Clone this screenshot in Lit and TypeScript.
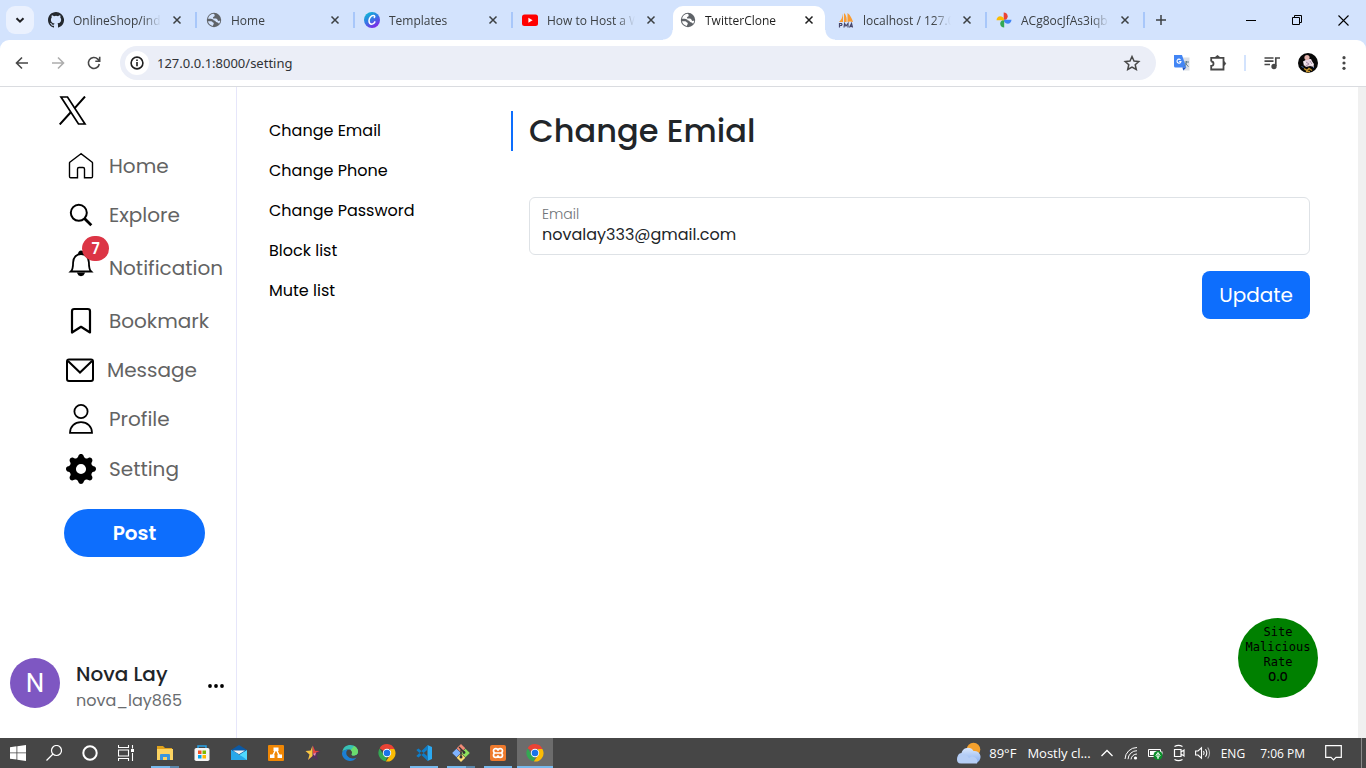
import { LitElement, html, css, svg, nothing } from "lit";
import { customElement } from "lit/decorators.js";
import { classMap } from "lit/directives/class-map.js";

const globe = svg`<svg class="fav" viewBox="0 0 16 16"><circle cx="8" cy="8" r="7.200" fill="#5f6368"/><path d="M7.200 1.800C8.400 2 9 3 8.600 4c-.4.900-1.600.800-1.700 1.700 0 .8.900.900 2 .9 1.300 0 2.400.400 2.700 1.500.3 1.200 1.600 1.100 2.500.5.1 1.200-.4 2.400-1 3.200-.9-.4-1.200-1.500-2.300-1.500-1.200 0-1.300-1.700-2.400-1.700-.7 0-.9-.5-1.300-1C6.500 7 5.300 6.700 4 6.700H2c.6-2.600 2.700-4.600 5.200-4.900zM2 9.300h3.200c1.100 0 1.100 1 1.900 1.300.8.300.9 1.200.3 1.900-.3.400-.3 1-.6 1.400C4.300 13.500 2.400 11.600 2 9.300z" fill="#d3e3fd" class="land"/></svg>`;
const github = svg`<svg class="fav" viewBox="0 0 16 16"><path fill="#24292f" d="M8 0C3.580 0 0 3.580 0 8c0 3.540 2.290 6.530 5.470 7.590.4.070.550-.170.550-.380 0-.190-.010-.820-.010-1.490-2.010.370-2.530-.490-2.690-.940-.090-.230-.480-.940-.820-1.130-.280-.150-.680-.520-.010-.530.630-.010 1.080.580 1.230.820.720 1.210 1.870.870 2.330.660.070-.520.280-.870.510-1.070-1.780-.2-3.640-.890-3.640-3.950 0-.870.310-1.590.820-2.150-.080-.2-.360-1.020.080-2.120 0 0 .670-.210 2.200.820a7.600 7.600 0 0 1 4 0c1.530-1.040 2.200-.820 2.200-.820.440 1.100.160 1.920.080 2.120.510.560.820 1.270.820 2.150 0 3.070-1.870 3.750-3.650 3.950.290.250.540.730.540 1.480 0 1.070-.010 1.930-.010 2.200 0 .210.150.460.550.380A8 8 0 0 0 8 0z"/></svg>`;
const canva = svg`<svg class="fav" viewBox="0 0 16 16"><defs><linearGradient id="cv" x1="0" y1="0" x2=".6" y2="1"><stop offset="0" stop-color="#08c8cf"/><stop offset=".5" stop-color="#2f7fe4"/><stop offset="1" stop-color="#7d2ae8"/></linearGradient></defs><circle cx="8" cy="8" r="8" fill="url(#cv)"/><path d="M10.300 5.500c.9-.8.3-2-1-2C7 3.500 5 6.200 5 8.800c0 2 1 3.400 2.700 3.400 1.500 0 2.600-1 3.200-2.300" fill="none" stroke="#fff" stroke-width="1.500" stroke-linecap="round"/></svg>`;
const youtube = svg`<svg class="fav" viewBox="0 0 16 16"><rect x="0" y="2.500" width="16" height="11.500" rx="2.500" fill="#f00"/><path d="M6.400 5.800v5l4.200-2.500z" fill="#fff"/></svg>`;
const pma = svg`<svg class="fav" viewBox="0 0 16 16"><path d="M5 1.500V10H1c2-1.500 3.500-4.500 4-8.500zM6 1c2.500 2 3 6 2.500 9H6zM9.500 1c3 2 4.500 6 5.500 9-2-.8-4-.8-5.500 0z" fill="#f89c34"/><path d="M1.500 15.500v-4h2q1 1 0 2h-2M6 15.500l.6-4 1.400 2.500 2-2.500v4M11.500 15.500l2-4 1 4M12 14.300h2.500" stroke="#47476b" stroke-width="1.200" fill="none"/></svg>`;
const photos = svg`<svg class="fav" viewBox="0 0 16 16"><path d="M7.700 7.800V.5c2.300 0 4 1.600 4 3.700 0 1.500-.8 2.800-2 3.600z" fill="#ea4335"/><path d="M8 7.700h7.500c0 2.300-1.600 4-3.700 4-1.700 0-3.200-1-3.800-2.500z" fill="#4285f4"/><path d="M8.200 8.200v7.300c-2.300 0-4-1.600-4-3.700 0-1.500.8-2.800 2-3.600z" fill="#34a853"/><path d="M8 8.200H.5c0-2.300 1.600-4 3.700-4C5.900 4.200 7.400 5.200 8 6.700z" fill="#fbbc04"/></svg>`;
const closeX = svg`<svg width="10" height="10" viewBox="0 0 10 10"><path d="M1.500 1.500l7 7M8.500 1.500l-7 7" stroke="currentColor" stroke-width="1.500"/></svg>`;

const line = (w: number, h: number, vb: string, body: unknown, sw = 1) =>
  html`<svg width=${w} height=${h} viewBox=${vb} fill="none" stroke="currentColor" stroke-width=${sw}>${body}</svg>`;

const chromeLogo = svg`<svg width="18" height="18" viewBox="0 0 18 18"><path d="M9 9L1.600 4.200A8.400 8.400 0 0 1 16.500 5H9z" fill="#ea4335"/><path d="M1.600 4.600L5.800 11 9 13l-1.300 4.300A8.400 8.400 0 0 1 1.600 4.600z" fill="#34a853"/><path d="M16.400 5A8.400 8.400 0 0 1 7.800 17.400L12.200 11 12 5z" fill="#fbbc04"/><circle cx="9" cy="9" r="4.200" fill="#fff"/><circle cx="9" cy="9" r="3.300" fill="#1a73e8"/></svg>`;

const tabs = [
  { title: "OnlineShop/inde", icon: github },
  { title: "Home", icon: globe },
  { title: "Templates", icon: canva },
  { title: "How to Host a W", icon: youtube },
  { title: "TwitterClone", icon: globe, active: true },
  { title: "localhost / 127.0", icon: pma },
  { title: "ACg8ocJfAs3iqb", icon: photos },
];

@customElement("browser-bar")
class BrowserBar extends LitElement {
  static styles = css`
    :host { display: block; font-family: "Segoe UI", "Noto Sans", "Open Sans", sans-serif; font-size: 12px; color: #3c4043; }
    button { border: 0; padding: 0; background: none; color: inherit; font: inherit; display: grid; place-items: center; flex: none; }
    svg { display: block; }
    .strip { height: 40px; background: #d3e3fd; display: flex; align-items: flex-start; font-family: "Segoe UI", "Open Sans", sans-serif; }
    .search { width: 28px; height: 28px; margin: 6px 4px 0 6px; border-radius: 9px; background: #eaf1fe; color: #202124; }
    .tab { box-sizing: border-box; flex: 0 1 158px; min-width: 0; height: 34px; margin-top: 6px; padding: 0 12px 6px 10px; display: flex; align-items: center; position: relative; }
    .tab::after { content: ""; position: absolute; right: -1px; top: 6px; width: 2px; height: 16px; background: #a8c7fa; }
    .tab.before::after, .tab.active::after { display: none; }
    .fav { width: 16px; height: 16px; flex: none; }
    .title { flex: 1; min-width: 0; margin-left: 9px; margin-right: 8px; overflow: hidden; white-space: nowrap; line-height: 18px; padding-top: 1px; mask-image: linear-gradient(to right, #000 calc(100% - 18px), transparent); }
    .close { width: 16px; height: 16px; margin-right: -1px; }
    .tab.active { color: #1f1f1f; }
    .shape { position: absolute; inset: 0 3px; background: #fff; border-radius: 10px 10px 0 0; }
    .shape::before, .shape::after { content: ""; position: absolute; bottom: 0; width: 10px; height: 10px; }
    .shape::before { right: 100%; background: radial-gradient(circle at 0 0, transparent 9px, #fff 10px); }
    .shape::after { left: 100%; background: radial-gradient(circle at 100% 0, transparent 9px, #fff 10px); }
    .tab > :not(.shape) { position: relative; }
    .active .land { fill: #fff; }
    .new { width: 28px; height: 28px; margin: 6px 0 0 3px; }
    .wins { margin-left: auto; display: flex; color: #000; }
    .wins button { width: 46px; height: 40px; }
    .bar { height: 46px; box-sizing: border-box; background: #fff; display: flex; align-items: center; border-radius: 9px 9px 0 0; padding: 0 4px; color: #474747; }
    .under { background: #d3e3fd; border-bottom: 1px solid #dadce0; }
    .bar > button { width: 36px; height: 34px; }
    .fwd { color: #adadad; }
    .omni { flex: 1; height: 34px; margin: 0 8px; border-radius: 17px; background: #ebeef7; display: flex; align-items: center; padding: 0 15px 0 5px; }
    .info { width: 24px; height: 24px; border-radius: 50%; background: #fff; color: #1f1f1f; }
    .url { flex: 1; min-width: 0; border: 0; background: none; padding: 0 0 0 8px; font: inherit; font-size: 13px; color: #303236; outline: 0; }
    .rule { width: 2px; height: 16px; background: #d3e3fd; margin: 0 8px; }
  `;
  render() {
    return html`
      <div class="strip">
        <button class="search" aria-label="Search tabs">${line(10, 10, "0 0 10 10", svg`<path d="M1.500 3.200L5 6.700l3.500-3.500"/>`, 2)}</button>
        ${tabs.map(
          (t, i) => html`<div class=${classMap({ tab: true, active: !!t.active, before: !!tabs[i + 1]?.active })}>
            ${t.active ? html`<span class="shape"></span>` : nothing}
            ${t.icon}<span class="title">${t.title}</span><button class="close" aria-label="Close tab">${closeX}</button>
          </div>`
        )}
        <button class="new" aria-label="New tab">${line(12, 12, "0 0 12 12", svg`<path d="M6 1v10M1 6h10"/>`, 1.5)}</button>
        <div class="wins">
          <button aria-label="Minimize">${line(10, 10, "0 0 10 10", svg`<path d="M0 5.500h10"/>`)}</button>
          <button aria-label="Restore">${line(10, 10, "0 0 10 10", svg`<path d="M.5 2.500h7v7h-7zM2.500 2.500v-2h7v7h-2"/>`)}</button>
          <button aria-label="Close">${line(11, 11, "0 0 11 11", svg`<path d="M.5.5l10 10M10.500.5l-10 10"/>`, 1.1)}</button>
        </div>
      </div>
      <div class="under"><div class="bar">
        <button aria-label="Back">${line(16, 16, "0 0 16 16", svg`<path d="M14 8H3M8 2.500L2.500 8 8 13.500"/>`, 1.6)}</button>
        <button class="fwd" aria-label="Forward">${line(16, 16, "0 0 16 16", svg`<path d="M2 8h11M8 2.500L13.500 8 8 13.500"/>`, 1.6)}</button>
        <button aria-label="Reload">${line(16, 16, "0 0 16 16", svg`<path d="M13.300 9A5.500 5.500 0 1 1 11.800 4.100L13.500 5.800M13.700 1.800v4.400H9.300"/>`, 1.6)}</button>
        <div class="omni">
          <button class="info" aria-label="Site information">${line(14, 14, "0 0 14 14", svg`<circle cx="7" cy="7" r="5.900"/><path d="M7 6v4.300M7 3.600v1.500"/>`, 1.6)}</button>
          <input class="url" aria-label="Address" value="127.0.0.1:8000/setting" />
          <button aria-label="Bookmark">${line(18, 18, "0 0 18 18", svg`<path d="M9 2.500l2 4.500 4.800.5-3.600 3.200 1.100 4.800L9 13l-4.300 2.500 1.100-4.800L2.200 7.500 7 7z"/>`, 1.5)}</button>
        </div>
        <button aria-label="Translate"><svg width="18" height="18" viewBox="0 0 18 18"><path d="M8 3.500h8.500v13H10z" fill="#dcdfe4"/><path d="M1 1h8l4.300 12.500H2.500Q1 13.500 1 12z" fill="#4285f4"/><path d="M9.500 13.500h3.800l-3 3z" fill="#1a53c4"/><path d="M7.500 5.800A2 2 0 1 0 8 7.500H6.200" stroke="#fff" stroke-width="1.100" fill="none"/><path d="M11.500 8h4.500M13.500 7v1q-.5 3-2 4M12.500 9q1 2.500 3 3.500" stroke="#607d8b" fill="none"/></svg></button>
        <button aria-label="Extensions">${line(20, 18, "0 0 20 18", svg`<path d="M3.200 7.500V3.800H15.500v11.700H3.200v-3.700q2.300 0 2.300-2.100T3.200 7.500"/><path d="M7.600 3.300q1.900-3.400 3.800 0zM16 7.700q3.200 1.800 0 3.600z" fill="currentColor" stroke-width="1"/>`, 1.8)}</button>
        <span class="rule"></span>
        <button aria-label="Media">${line(18, 18, "0 0 18 18", svg`<path d="M1.500 4h9M1.500 7.200h9M1.500 10.500h5.500M12.800 12V4H17"/><circle cx="11" cy="12.500" r="1.800" fill="currentColor"/>`, 1.7)}</button>
        <button aria-label="Profile"><svg width="20" height="20" viewBox="0 0 20 20"><circle cx="10" cy="10" r="10" fill="#080808"/><path d="M6 8l3-2 4 0 2 4 1 4-4-1-4 1-2-2z" fill="#e6d3e0"/><path d="M12 7l4 4-1 2-3-2zM5 8l3 1-2 4z" fill="#f3ecf0"/><circle cx="9" cy="4.500" r="2.600" fill="#e3b3ad"/><path d="M8 9l3 2-3 2M12 8l2 3" stroke="#a58da4" fill="none"/><path d="M6 15.500l3 2 2-2 3 2M8 18.500h4" stroke="#c4932c" stroke-width="1.500" fill="none"/><path d="M3.500 13l2 2M15 15l1-1" stroke="#3d69aa"/></svg></button>
        <button aria-label="Menu"><svg width="16" height="16" viewBox="0 0 16 16" fill="currentColor"><circle cx="8" cy="2.700" r="1.600"/><circle cx="8" cy="8" r="1.600"/><circle cx="8" cy="13.300" r="1.600"/></svg></button>
      </div></div>`;
  }
}

const navItems = [
  { label: "Home", icon: line(30, 30, "0 0 30 30", svg`<path d="M15 2.700L3.800 11.200q-.3.300-.3.800v13.500q0 1.200 1.200 1.200h6.800V18q0-1.500 1.500-1.500h4q1.500 0 1.500 1.500v8.700h6.800q1.200 0 1.200-1.200V12q0-.5-.3-.8z"/>`, 1.4) },
  { label: "Explore", icon: line(30, 30, "0 0 30 30", svg`<circle cx="12.800" cy="12.800" r="8"/><path d="M18.500 18.500l6.800 6.800" stroke-width="2.800"/>`, 2) },
  { label: "Notification", badge: "7", icon: line(30, 30, "0 0 30 30", svg`<path d="M4.800 22.500q2.300-2 2.300-9C7.100 8.500 10.500 5 15 5s7.900 3.500 7.900 8.500q0 7 2.300 9z"/><path d="M13 4.500a2 2 0 0 1 4 0zM12.200 24.300h5.600q-.6 2-2.800 2t-2.800-2z" fill="currentColor"/>`, 1.8) },
  { label: "Bookmark", icon: line(30, 30, "0 0 30 30", svg`<path d="M6 5.200q0-2.200 2.200-2.200h13.600q2.200 0 2.200 2.200V26.500L15 20.800l-9 5.700z" stroke-linejoin="round"/>`, 2.2) },
  { label: "Message", icon: line(28, 28, "0 0 28 28", svg`<rect x="1" y="3.500" width="26" height="21.500" rx="2"/><path d="M2 5l12 11.500L26 5"/>`, 2) },
  { label: "Profile", icon: line(30, 32, "0 0 30 32", svg`<circle cx="15" cy="8.500" r="6.600"/><path d="M4 29.800c0-6.500 4.700-10.600 11-10.600s11 4.100 11 10.600z"/>`, 1.8) },
  { label: "Setting", icon: html`<svg width="30" height="30" viewBox="0 0 16 16" fill="currentColor"><path d="M9.405 1.050c-.413-1.400-2.397-1.400-2.810 0l-.1.340a1.464 1.464 0 0 1-2.105.872l-.310-.170c-1.283-.698-2.686.705-1.987 1.987l.169.311c.446.820.023 1.841-.872 2.105l-.340.1c-1.400.413-1.400 2.397 0 2.810l.340.1a1.464 1.464 0 0 1 .872 2.105l-.170.310c-.698 1.283.705 2.686 1.987 1.987l.311-.169a1.464 1.464 0 0 1 2.105.872l.1.340c.413 1.400 2.397 1.400 2.810 0l.1-.340a1.464 1.464 0 0 1 2.105-.872l.310.170c1.283.698 2.686-.705 1.987-1.987l-.169-.311a1.464 1.464 0 0 1 .872-2.105l.340-.1c1.400-.413 1.400-2.397 0-2.810l-.340-.1a1.464 1.464 0 0 1-.872-2.105l.170-.310c.698-1.283-.705-2.686-1.987-1.987l-.311.169a1.464 1.464 0 0 1-2.105-.872zM8 10.700a2.700 2.700 0 1 1 0-5.400 2.700 2.700 0 0 1 0 5.400z"/></svg>` },
];
const settings = ["Change Email", "Change Phone", "Change Password", "Block list", "Mute list"];

@customElement("site-page")
class SitePage extends LitElement {
  static styles = css`
    :host { display: flex; position: relative; background: #fff; min-height: 0; font-family: Poppins, Inter, sans-serif; color: #212529; }
    svg { display: block; }
    a { color: inherit; text-decoration: none; }
    .side { box-sizing: border-box; width: 237px; flex: none; border-right: 1px solid #e6e6fa; display: flex; flex-direction: column; }
    .logo { height: 46px; padding: 9px 0 0 59px; box-sizing: border-box; color: #000; }
    .nav { padding: 8px 0 0 66px; display: flex; flex-direction: column; }
    .link { height: 49px; display: flex; align-items: center; gap: 13px; font-size: 20px; line-height: 30px; color: #636363; }
    .link.tall { height: 57px; }
    .link:nth-last-child(-n + 2) { height: 50px; }
    .icon { position: relative; color: #000; }
    .tall .icon { margin-bottom: 8px; }
    .badge { position: absolute; left: 16px; top: -13px; width: 27px; height: 25px; border-radius: 13px; background: #dc3545; color: #fff; font-size: 15px; font-weight: 600; line-height: 25px; text-align: center; }
    button { font: inherit; border: 0; padding: 0; cursor: pointer; }
    .post { margin: 15px 31px 0 64px; height: 48px; border-radius: 24px; background: #0d6efd; color: #fff; font-size: 20px; font-weight: 600; flex: none; }
    .user { margin-top: auto; padding: 0 12px 25px 10px; display: flex; align-items: center; }
    .avatar { width: 50px; height: 50px; border-radius: 50%; background: #7e57c2; color: #fff; display: grid; place-items: center; font-family: Roboto, sans-serif; font-size: 26px; flex: none; }
    .who { margin-left: 16px; padding-top: 6px; flex: 1; }
    .name { font-size: 20px; font-weight: 500; line-height: 30px; }
    .handle { font-size: 16px; line-height: 24px; color: #696c6f; }
    .more { background: none; color: #000; margin-top: 6px; }
    .menu { width: 274px; flex: none; box-sizing: border-box; padding: 24px 0 0 32px; }
    .menu a { display: block; width: max-content; font-size: 16px; line-height: 40px; color: #000; }
    .main { flex: 1; min-width: 0; padding: 24px 48px 0 0; }
    h1 { margin: 0 0 46px; padding-left: 16px; border-left: 2px solid #0d6efd; font-size: 32px; line-height: 40px; font-weight: 500; }
    form { padding-left: 18px; display: flex; flex-direction: column; gap: 16px; }
    .field { box-sizing: border-box; height: 58px; border: 1px solid #dee2e6; border-radius: 6px; padding: 6px 12px 0; display: flex; flex-direction: column; gap: 1px; }
    .field label { font-size: 14px; line-height: 20px; font-weight: 300; color: #6f7377; }
    .field input { border: 0; padding: 0; outline: 0; background: none; color: #212529; font: inherit; font-size: 16px; line-height: 20px; height: 20px; }
    .update { align-self: flex-end; height: 48px; padding: 0 17px; border-radius: 8px; background: #0d6efd; color: #fff; font-size: 20px; }
    .scroll { width: 8px; background: #f0f0f0; }
    .rate { position: absolute; right: 48px; bottom: 40px; width: 80px; height: 80px; box-sizing: border-box; padding-top: 7px; border-radius: 50%; background: #008000; color: #000; text-align: center; font-family: "DejaVu Sans Mono", monospace; font-size: 12px; line-height: 15px; }
    .rate span { display: block; }
    .rate .score { font-family: Poppins, Inter, sans-serif; font-size: 13px; font-weight: 500; line-height: 13px; }
  `;
  render() {
    return html`
      <aside class="side">
        <a class="logo" href="#" aria-label="X"><svg width="28" height="29" viewBox="0 0 28 29" fill="none" stroke="currentColor"><path d="M2 1h6.500L26 28h-6.500z" stroke-width="1.700"/><path d="M26 .5L15.500 12.300M12 16L.7 28.500" stroke-width="2"/></svg></a>
        <nav class="nav">
          ${navItems.map((n) => html`<a href="#" class=${classMap({ link: true, tall: !!n.badge })}><span class="icon">${n.icon}${n.badge ? html`<span class="badge">${n.badge}</span>` : nothing}</span>${n.label}</a>`)}
        </nav>
        <button class="post">Post</button>
        <div class="user">
          <span class="avatar">N</span>
          <div class="who"><div class="name">Nova Lay</div><div class="handle">nova_lay865</div></div>
          <button class="more" aria-label="More"><svg width="16" height="6" viewBox="0 0 16 6"><circle cx="2" cy="3" r="1.900"/><circle cx="8" cy="3" r="1.900"/><circle cx="14" cy="3" r="1.900"/></svg></button>
        </div>
      </aside>
      <nav class="menu">${settings.map((s) => html`<a href="#">${s}</a>`)}</nav>
      <main class="main">
        <h1>Change Emial</h1>
        <form>
          <div class="field"><label for="email">Email</label><input id="email" type="email" value="novalay333@gmail.com" /></div>
          <button class="update" type="button">Update</button>
        </form>
      </main>
      <div class="scroll"></div>
      <div class="rate"><span>Site</span><span>Malicious</span><span>Rate</span><span class="score">0.0</span></div>`;
  }
}

const sysIcons = [
  { name: "Start", icon: svg`<svg width="16" height="16" viewBox="0 0 16 16" fill="#fff"><path d="M0 2.200L6.500 1.300v6.200H0zM7.300 1.200L16 0v7.500H7.300zM0 8.300h6.500v6.300L0 13.700zM7.300 8.300H16V16l-8.700-1.300z"/></svg>` },
  { name: "Search", icon: line(16, 16, "0 0 16 16", svg`<circle cx="10.500" cy="5.500" r="5"/><path d="M7 9L.5 15.500"/>`, 1.2) },
  { name: "Cortana", icon: line(16, 16, "0 0 16 16", svg`<circle cx="8" cy="8" r="6.700"/>`, 2) },
  { name: "Task view", icon: line(17, 16, "0 0 17 16", svg`<path d="M.5 0v2.500h10V0M.5 5h10v6H.5zM.5 16v-2.500h10V16M14.500 0v3.500M14.500 8v8"/><path d="M13 4h3v3h-3z" fill="currentColor" stroke="none"/>`, 1.1) },
];

const apps = [
  { name: "Explorer", run: "two", icon: svg`<svg width="18" height="18" viewBox="0 0 18 18"><path d="M1 2h6l2 2h7v4H1z" fill="#e0a21b"/><path d="M1 5h16v11H1z" fill="#fcd462"/><path d="M4 16v-5q0-1 1-1h8q1 0 1 1v5h-3v-3H7v3z" fill="#3a96dd"/></svg>` },
  { name: "Store", icon: svg`<svg width="18" height="18" viewBox="0 0 18 18"><path d="M5 5V2h8v3" fill="none" stroke="#29a3e8" stroke-width="1.500"/><rect x="1.500" y="4" width="15" height="13" rx="1.800" fill="#f5f5f5"/><path d="M5 6.500h3.500V10H5z" fill="#f25022"/><path d="M9.500 6.500H13V10H9.500z" fill="#7fba00"/><path d="M5 11h3.500v3.500H5z" fill="#00a4ef"/><path d="M9.500 11H13v3.500H9.500z" fill="#ffb900"/></svg>` },
  { name: "Mail", icon: svg`<svg width="18" height="18" viewBox="0 0 18 18"><path d="M1 6l8-5 8 5-2 4H3z" fill="#0c59a4"/><path d="M1 6l8 5 8-5v10H1z" fill="#50d9ff"/><path d="M1 16V6l12 7 4 3z" fill="#28a8ea"/><path d="M3 6.500h12L9 10.200z" fill="#f1f1f1"/></svg>` },
  { name: "Draw", icon: svg`<svg width="18" height="18" viewBox="0 0 18 18"><rect x="1" y="1" width="16" height="16" rx="1" fill="#f08705"/><path d="M9 5L5.500 12M9 5l3.500 7" stroke="#fff" stroke-width="1.500"/><path d="M6.500 3.500h5v3.500h-5zM3 10.500h4.500V14H3zM10.500 10.500H15V14h-4.500z" fill="#fff"/></svg>` },
  { name: "Star", icon: svg`<svg width="18" height="18" viewBox="0 0 18 18"><path d="M9 1l2.300 5.700L16.500 7l-4 4 1.500 5.500L9 13.300 4 16.500 5.500 11l-4-4 5.200-.3z" fill="#55305f"/><path d="M8.500 1.500V12L4 16l1.500-5.500-4-3.500 5.200-.5z" fill="#f9c940"/><path d="M9 2l2 4.700L15.500 7 9 10z" fill="#e8453c"/><path d="M9 10l3-1.500L11 12z" fill="#f58ab0"/></svg>` },
  { name: "Edge", icon: svg`<svg width="18" height="18" viewBox="0 0 18 18"><path d="M1.200 8C2 3.500 5 1 9.500 1 14 1 17 4.300 17 7.500c0 3-2.500 4-4.500 4-1.500 0-2.300-.7-1.700-1.500C12 7.500 10.500 5.500 7.500 5.500 4.500 5.500 2 6.500 1.200 8z" fill="#38c1b5"/><path d="M13 2q4 2 4 5.500c0 3-2.500 4-4.500 4-1.500 0-2.300-.7-1.700-1.500q1-2-1-4z" fill="#6bdc6c"/><path d="M1 9c.5-2.500 3-3.500 6-3.500-2 1.500-2.700 5 .5 7.500 2.500 2 6 1.500 8 .5-1.500 2.500-4 3.500-6.500 3.500C4.500 17 .8 13 1 9z" fill="#1b7fd5"/></svg>` },
  { name: "Chrome", icon: chromeLogo },
  { name: "VS Code", run: "one", icon: svg`<svg width="18" height="18" viewBox="0 0 18 18"><path d="M12.500 1L17 3v12l-4.500 2z" fill="#2aa9f2"/><path d="M12.700 1v4.500L3.500 13.500 1.300 12zM12.700 17v-4.500L3.500 4.500 1.300 6z" fill="#0e7dc8"/></svg>` },
  { name: "Git", run: "two", icon: svg`<svg width="18" height="18" viewBox="0 0 18 18"><path d="M9 0l4.300 4.300L9 8.600 4.700 4.300z" fill="#f08a76"/><path d="M4.500 4.700L8.800 9l-4.300 4.300L.2 9z" fill="#80b3ff"/><path d="M13.500 4.700L17.800 9l-4.300 4.300L9.200 9z" fill="#8de05d"/><path d="M9 9.400l4.300 4.300L9 18l-4.300-4.300z" fill="#ffdc73"/><path d="M7 3l5 5M9 5v8" stroke="#333" stroke-width="1.300"/><circle cx="9" cy="13" r="1.500" fill="#333"/><circle cx="12" cy="8.500" r="1.400" fill="#333"/></svg>` },
  { name: "XAMPP", run: "one", icon: svg`<svg width="18" height="18" viewBox="0 0 18 18"><rect x="1" y="1" width="16" height="16" rx="2" fill="#ee7a2d"/><path d="M9 6.800C9 4 4.500 4 4.500 6.500 4.500 8 5.500 9 6.500 9 5 9 4.500 10 4.500 11.300 4.500 14 9 14 9 11.300 9 14 13.500 14 13.500 11.300 13.500 10 12.800 9 11.500 9c1.200 0 2-1 2-2.500C13.500 4 9 4 9 6.800zM6.500 9h5" fill="none" stroke="#fff" stroke-width="1.700"/></svg>` },
  { name: "Chrome window", run: "full", icon: chromeLogo },
];

@customElement("task-bar")
class TaskBar extends LitElement {
  static styles = css`
    :host { display: flex; align-items: stretch; height: 30px; background: #464646; color: #fff; font-family: "Segoe UI", "Open Sans", "Noto Sans", sans-serif; font-size: 12px; white-space: nowrap; }
    button { border: 0; padding: 0; background: none; color: inherit; font: inherit; display: grid; place-items: center; width: 36px; }
    svg { display: block; }
    .group { display: flex; }
    .apps { margin-left: 3px; gap: 1px; }
    .apps button { position: relative; }
    .one::after, .two::after, .full::after { content: ""; position: absolute; left: 4px; right: 4px; bottom: 0; height: 2px; background: #76b9ed; }
    .two::after { background: linear-gradient(to right, #76b9ed 19px, #5a87aa 19px); }
    .full { background: #6c6c6c; }
    .full::after { left: 0; right: 0; }
    .tray { margin-left: auto; align-items: center; }
    .weather { display: flex; align-items: center; gap: 7px; width: auto; font-size: 13px; margin-right: 4px; }
    .weather .temp { margin-right: 4px; }
    .tray .ico { width: 24px; height: 30px; }
    .lang, .clock { font-size: 12px; width: auto; }
    .lang { margin-left: 6px; }
    .clock { margin: 0 10px 0 15px; }
    .desk { border-left: 1px solid #8a8a8a; height: 30px; width: 4px; margin-left: 10px; }
  `;
  render() {
    return html`
      <div class="group">${sysIcons.map((s) => html`<button aria-label=${s.name}>${s.icon}</button>`)}</div>
      <div class="group apps">${apps.map((a) => html`<button aria-label=${a.name} class=${a.run ?? ""}>${a.icon}</button>`)}</div>
      <div class="group tray">
        <button class="weather"><svg width="26" height="22" viewBox="0 0 26 22"><defs><linearGradient id="cl" x1="0" y1="0" x2="0" y2="1"><stop offset="0" stop-color="#dbe8fc"/><stop offset="1" stop-color="#87aef0"/></linearGradient></defs><circle cx="17.500" cy="7.500" r="6.800" fill="#f5a12d"/><path d="M6 21a5 5 0 0 1-.5-9.900A6.500 6.500 0 0 1 17.500 9a6 6 0 0 1 2 12z" fill="url(#cl)"/><path d="M5 21.500a4 4 0 0 1 0-8 6 6 0 0 1 8 2.500 5 5 0 0 1 8 5.500z" fill="#b6cef6"/></svg><span class="temp">89°F</span><span>Mostly cl...</span></button>
        <button class="ico" aria-label="Hidden icons">${line(12, 8, "0 0 12 8", svg`<path d="M.5 7L6 1.500 11.500 7"/>`, 1.3)}</button>
        <button class="ico" aria-label="Network">${line(14, 14, "0 0 14 14", svg`<path d="M1 13A12 12 0 0 1 13 1.500M4 13.200A9 9 0 0 1 13 4.700M7 13.400A6 6 0 0 1 13 8" /><circle cx="11.500" cy="12" r="1.600" fill="currentColor" stroke="none"/>`, 1)}</button>
        <button class="ico" aria-label="Battery"><svg width="16" height="14" viewBox="0 0 16 14"><path d="M1.500 3.500h12v7h-12z" fill="none" stroke="#fff"/><path d="M3 5h7v4H3zM14 5.500h1.500v3H14z" fill="#fff"/><circle cx="11" cy="9.500" r="4.500" fill="#0a8f2a"/><path d="M11 6.500l2 3-2 2-2-2zM11 8v5" stroke="#fff" fill="none"/></svg></button>
        <button class="ico" aria-label="Camera">${line(14, 18, "0 0 14 18", svg`<path d="M2.500 5.500h6.500v7H2.500zM9 8l3-2v6l-3-2M2.500 2.500Q6.500.2 10.500 2.500M2.500 15.500q4 2.300 8 0"/>`, 1.2)}</button>
        <button class="ico" aria-label="Volume">${line(16, 14, "0 0 16 14", svg`<path d="M.6 5v4h2.400l3.500 3.200V1.800L3 5zM8.500 5q1.300 2 0 4M10.500 3.300q2.600 3.700 0 7.400"/><path d="M12.700 1.500q3.700 5.500 0 11" opacity=".6"/>`, 1.1)}</button>
        <button class="lang">ENG</button>
        <button class="clock">7:06 PM</button>
        <button aria-label="Notifications">${line(17, 16, "0 0 17 16", svg`<path d="M.7.7h15.600v11.600H11l-2.500 2.500L6 12.300H.7z"/>`, 1.2)}</button>
        <span class="desk"></span>
      </div>`;
  }
}

@customElement("app-root")
class AppRoot extends LitElement {
  static styles = css`
    :host { display: flex; flex-direction: column; height: 100vh; overflow: hidden; }
    .page { flex: 1; }
  `;
  render() {
    return html`<browser-bar></browser-bar><site-page class="page"></site-page><task-bar></task-bar>`;
  }
}
